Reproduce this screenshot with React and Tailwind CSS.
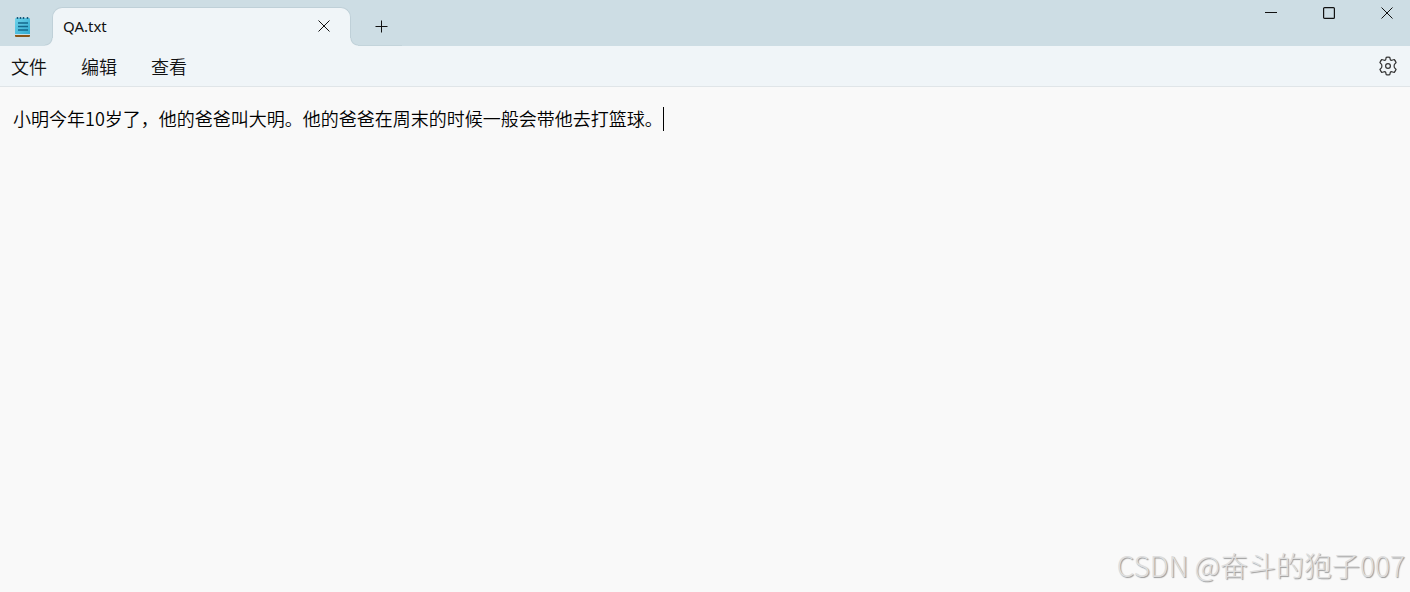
import React, { useState } from "react";

const menus = ["文件", "编辑", "查看"];

const NotepadIcon = () => (
  <svg width="16" height="21" viewBox="0 0 16 21" aria-hidden="true">
    <defs>
      <linearGradient id="page" x1="0" y1="0" x2="1" y2="1">
        <stop offset="0" stopColor="#6fd3ea" />
        <stop offset="1" stopColor="#2fa9d0" />
      </linearGradient>
    </defs>
    <rect x="0" y="17" width="15" height="3" rx="1" fill="#8a5416" />
    <rect x="0" y="1" width="15" height="17" rx="1" fill="url(#page)" />
    <path d="M0 17.5h15" stroke="#c5dfe8" />
    <path d="M2.5 0v2M5.5 0v2M8.5 0v2M12.5 0v2" stroke="#175a7c" strokeWidth="1.5" />
    <path d="M3 6h10M3 9.5h10M3 13h10" stroke="#14688c" strokeWidth="1.7" />
  </svg>
);

const CrossIcon = ({ size }) => (
  <svg width={size} height={size} viewBox="0 0 12 12" stroke="currentColor" aria-hidden="true">
    <path d="M.5 .5l11 11M11.5 .5l-11 11" strokeWidth="1" />
  </svg>
);

const GearIcon = () => (
  <svg
    width="20"
    height="20"
    viewBox="0 0 20 20"
    fill="none"
    stroke="#333"
    strokeWidth="1.2"
    strokeLinejoin="round"
    aria-hidden="true"
  >
    <path d="M8.2 1.3Q10 .9 11.8 1.3L12.3 3.6Q12.8 4.5 13.9 4.2L16.2 3.5Q17.5 4.9 18.1 6.7L16.4 8.4Q15.8 10 16.4 11.6L18.1 13.3Q17.5 15.1 16.2 16.5L13.9 15.8Q12.8 15.5 12.3 16.4L11.8 18.7Q10 19.1 8.2 18.7L7.7 16.4Q7.2 15.5 6.1 15.8L3.8 16.5Q2.5 15.1 1.9 13.3L3.6 11.6Q4.2 10 3.6 8.4L1.9 6.7Q2.5 4.9 3.8 3.5L6.1 4.2Q7.2 4.5 7.7 3.6Z" />
    <circle cx="10" cy="10" r="2.4" />
  </svg>
);

const TitleBar = () => (
  <header className="flex h-[46px] items-end bg-[#cddde4]">
    <div className="flex h-[38px] w-[52px] items-center pl-[15px]">
      <NotepadIcon />
    </div>

    {/* Active tab */}
    <div className="relative flex h-[39px] w-[299px] items-center justify-between rounded-t-[10px] border border-b-0 border-[#bfd0d8] bg-[#f0f5f8] pr-[20px] pb-[2px] pl-[10px]">
      <span className="absolute bottom-0 -left-2 size-2 bg-[radial-gradient(circle_at_0_0,transparent_6px,#bfd0d8_7px,#f0f5f8_8px)]" />
      <span className="absolute -right-2 bottom-0 size-2 bg-[radial-gradient(circle_at_100%_0,transparent_6px,#bfd0d8_7px,#f0f5f8_8px)]" />
      <span className="font-['Noto_Sans',sans-serif] text-[15px] leading-5 font-normal">QA.txt</span>
      <button type="button" aria-label="关闭标签页">
        <CrossIcon size={12} />
      </button>
    </div>

    <div className="flex h-[38px] w-[51px] items-center border-b border-[#c3d4db] pl-[24px]">
      <button type="button" aria-label="新建标签页">
        <svg width="13" height="13" viewBox="0 0 13 13" stroke="currentColor" aria-hidden="true">
          <path d="M6.5 .5v12M.5 6.5h12" />
        </svg>
      </button>
    </div>

    {/* Window controls */}
    <div className="ml-auto flex h-[46px] items-start gap-[46px] pt-[7px] pr-[17px]">
      <button type="button" aria-label="最小化">
        <svg width="12" height="12" viewBox="0 0 12 12" stroke="currentColor" aria-hidden="true">
          <path d="M0 5.5h12" />
        </svg>
      </button>
      <button type="button" aria-label="最大化">
        <svg width="12" height="12" viewBox="0 0 12 12" fill="none" stroke="currentColor" aria-hidden="true">
          <rect x=".6" y=".6" width="10.8" height="10.8" rx="1" strokeWidth="1.2" />
        </svg>
      </button>
      <button type="button" aria-label="关闭">
        <CrossIcon size={12} />
      </button>
    </div>
  </header>
);

const MenuBar = () => (
  <nav className="flex h-[41px] items-center border-b border-[#e0e5e8] bg-[#f0f5f8] pr-[12px] pl-[11px]">
    <div className="flex gap-[34px]">
      {menus.map((menu) => (
        <button key={menu} type="button" className="text-[18px] leading-6">
          {menu}
        </button>
      ))}
    </div>
    <button type="button" aria-label="设置" className="ml-auto">
      <GearIcon />
    </button>
  </nav>
);

const App = () => {
  const [text, setText] = useState(
    "小明今年10岁了，他的爸爸叫大明。他的爸爸在周末的时候一般会带他去打篮球。"
  );

  return (
    <div className="relative flex min-h-screen flex-col bg-[#f9f9f9] font-['Noto_Sans_CJK_SC',sans-serif] font-[350] text-[#111]">
      <TitleBar />
      <MenuBar />

      <main className="relative flex flex-1">
        <textarea
          aria-label="文本编辑器"
          value={text}
          onChange={(e) => setText(e.target.value)}
          spellCheck={false}
          className="flex-1 resize-none bg-transparent px-[13px] pt-[19px] text-[18px] leading-6 text-black outline-none"
        />
        {/* Caret */}
        <span className="absolute top-[20px] left-[663px] h-6 w-px bg-black" />
      </main>

      {/* Watermark */}
      <p className="pointer-events-none absolute right-[5px] bottom-[7px] text-[28px] leading-10 font-light text-[#dedede] [text-shadow:1px_1px_1px_#999]">
        CSDN @奋斗的狍子007
      </p>
    </div>
  );
};

export default App;
